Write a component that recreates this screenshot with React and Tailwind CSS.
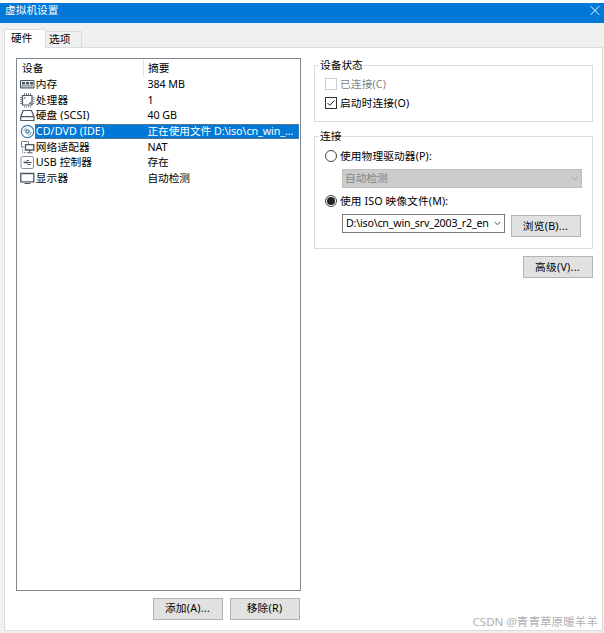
import { useState } from "react";
import clsx from "clsx";

const stroke = { fill: "none", stroke: "#4b5866", strokeWidth: 1 };

const MemoryIcon = () => (
  <svg width="15" height="15" viewBox="0 0 15 15" {...stroke}>
    <path d="M.5 3.5h13.5v7.5H.5z" fill="#e8ebee" />
    <path d="M2 5h3v2.5H2zM6 5h3v2.5H6zM10 5h3v2.5h-3z" fill="#4b5866" stroke="none" />
    <path d="M1 8.5h13" stroke="#a5acb3" />
    <path d="M1.5 10h12" strokeDasharray="2 1" />
  </svg>
);

const CpuIcon = () => (
  <svg width="15" height="15" viewBox="0 0 15 15" {...stroke}>
    <path d="M2.5 2.5h9.5v9.5H2.5z" strokeWidth="1.2" />
    <path
      d="M4.5 0v2M6.5 0v2M8.5 0v2M10.5 0v2M4.5 13v1.5M6.5 13v1.5M8.5 13v1.5M10.5 13v1.5M0 4.5h2M0 6.5h2M0 8.5h2M0 10.5h2M12.5 4.5h2M12.5 6.5h2M12.5 8.5h2M12.5 10.5h2"
      stroke="#7c8690"
    />
    <path d="M4.5 5.5V4.5h1M9 10.5h1.5V9" />
  </svg>
);

const DiskIcon = () => (
  <svg width="15" height="15" viewBox="0 0 15 15" {...stroke}>
    <path d="M3.2 2.5h8.3l2.5 6.2v3.8H.7V8.7zM1 8.7h13" strokeWidth="1.2" />
  </svg>
);

const DiscIcon = () => (
  <svg width="15" height="15" viewBox="0 0 15 15" fill="none" stroke="#3e7ca6">
    <circle cx="7.5" cy="7.5" r="6.2" fill="#fff" strokeWidth="1.2" />
    <circle cx="7.5" cy="7.5" r="1.7" strokeWidth="1.3" />
    <path d="M3.7 7.2a4 4 0 0 1 3.3-3.5M11.3 7.8A4 4 0 0 1 8 11.3" stroke="#7fa9c6" />
  </svg>
);

const NetworkIcon = () => (
  <svg width="15" height="15" viewBox="0 0 15 15" {...stroke}>
    <path d="M8.5 4V1.5h-7v5.5h3" stroke="#7c8690" />
    <path d="M2.5 9v3.5h4" stroke="#7c8690" strokeDasharray="1.5 1" />
    <path d="M5.5 4.7h8.3V10H5.5z" strokeWidth="1.3" />
    <path d="M9.6 10v2.5M7 12.8h5.5" />
  </svg>
);

const UsbIcon = () => (
  <svg width="15" height="15" viewBox="0 0 15 15" {...stroke}>
    <rect x="1" y="1.5" width="12.5" height="12" rx="1.5" stroke="#8a929a" />
    <path d="M4 7.5h7.5M5.5 7.5l1.5-2h2M6.5 7.5l1.5 2h1.5" />
    <path d="M3 7.5l2-1.200v2.400z" fill="#4b5866" stroke="none" />
    <path d="M9 9h1.5v1H9z" fill="#4b5866" stroke="none" />
  </svg>
);

const DisplayIcon = () => (
  <svg width="15" height="15" viewBox="0 0 15 15" {...stroke}>
    <path d="M.8 2.5h13v8.300H.8z" strokeWidth="1.3" />
    <path d="M4.5 12.5h6" />
  </svg>
);

const devices = [
  { icon: MemoryIcon, name: "内存", summary: "384 MB" },
  { icon: CpuIcon, name: "处理器", summary: "1" },
  { icon: DiskIcon, name: "硬盘 (SCSI)", summary: "40 GB" },
  { icon: DiscIcon, name: "CD/DVD (IDE)", summary: "正在使用文件 D:\\iso\\cn_win_..." },
  { icon: NetworkIcon, name: "网络适配器", summary: "NAT" },
  { icon: UsbIcon, name: "USB 控制器", summary: "存在" },
  { icon: DisplayIcon, name: "显示器", summary: "自动检测" },
];

const Chevron = ({ className = "" }) => (
  <svg width="7" height="5" viewBox="0 0 7 5" fill="none" stroke="currentColor" className={className}>
    <path d="M.5.8l3 3 3-3" />
  </svg>
);

const Button = ({ className = "", children }) => (
  <button
    className={clsx(
      "flex h-[22px] w-[70px] shrink-0 items-center justify-center border border-[#b4b4b4] bg-[#e1e1e1] pr-px tracking-[0.25px] whitespace-nowrap",
      className
    )}
  >
    {children}
  </button>
);

const Group = ({ title, className = "", children }) => (
  <fieldset className={clsx("w-[279px] border border-[#dcdcdc]", className)}>
    <legend className="ml-[4px] h-[14px] px-px leading-[14px]">{title}</legend>
    {children}
  </fieldset>
);

const Radio = ({ checked, onChange, children }) => (
  <label className="flex h-[14px] items-center gap-[3px] leading-[14px]">
    <input type="radio" className="sr-only" checked={checked} onChange={onChange} />
    <span className="flex size-[12px] items-center justify-center rounded-full border border-[#444]">
      {checked && <span className="size-[8px] rounded-full bg-[#222]" />}
    </span>
    <span className="tracking-[0.12px]">{children}</span>
  </label>
);

const DeviceList = () => {
  const [selected, setSelected] = useState(3);

  return (
    <div className="h-[533px] w-[285px] border border-[#828790] bg-white">
      <div className="flex h-[18px] items-center">
        <div className="flex h-full w-[127px] items-center border-r border-[#e5e5e5] pl-[5px]">设备</div>
        <div className="pl-[4px]">摘要</div>
      </div>
      {devices.map(({ icon: Icon, name, summary }, i) => (
        <div key={name} className="flex h-[15.6px] items-center" onClick={() => setSelected(i)}>
          <span className="flex w-[18px] shrink-0 justify-end">
            <Icon />
          </span>
          <div
            className={clsx(
              "mr-px flex h-full flex-1 items-center whitespace-nowrap",
              i === selected && "bg-[#0078d7] text-white outline-1 -outline-offset-1 outline-dotted outline-[#5b83a0]"
            )}
          >
            <span className="w-[112.5px] pl-[0.8px] tracking-[0.12px]">{name}</span>
            <span className="tracking-[-0.07px]">{summary}</span>
          </div>
        </div>
      ))}
    </div>
  );
};

const App = () => {
  const [source, setSource] = useState("iso");

  return (
    <div className="relative flex h-[633px] w-[604px] flex-col overflow-hidden bg-[#f0f0f0] pt-[3px] font-['Noto_Sans','Noto_Sans_CJK_SC',sans-serif] text-[10.7px] leading-[15px] text-black shadow-[inset_0_3px_0_#fff]">
      <header className="flex h-[20px] shrink-0 items-center justify-between bg-[#0078d7] pr-[4px] pb-[5px] pl-[5px] text-white">
        <span>虚拟机设置</span>
        <svg width="10" height="10" viewBox="0 0 10 10" fill="none" stroke="#fff">
          <path d="M.7.2l8.6 8.6M9.3.2L.7 8.8" />
        </svg>
      </header>

      <nav className="flex h-[24px] shrink-0 items-end pl-[4px]">
        <div className="z-10 -mb-px flex h-[19px] w-[42px] items-center border border-b-0 border-[#dcdcdc] bg-white pb-px pl-[6px]">
          硬件
        </div>
        <div className="flex h-[16px] w-[36px] items-center border border-b-0 border-l-0 border-[#dcdcdc] bg-[#f0f0f0] pl-[3px]">
          选项
        </div>
      </nav>

      <main className="ml-[4px] flex h-[584px] w-[599px] shrink-0 gap-[13px] border border-[#dcdcdc] bg-white pt-[10px] pl-[11px]">
        <section>
          <DeviceList />
          <div className="mt-[6.5px] flex justify-end gap-[7px] pr-px">
            <Button>添加(A)...</Button>
            <Button>移除(R)</Button>
          </div>
        </section>

        <section>
          <Group title="设备状态" className="h-[64px]">
            <div className="flex flex-col gap-[5px] pt-[5px] pl-[10px]">
              <label className="flex h-[14px] items-center gap-[3px] tracking-[0.15px] text-[#838383]">
                <span className="size-[12px] border border-[#ccc]" />
                已连接(C)
              </label>
              <label className="flex h-[14px] items-center gap-[3px] tracking-[0.15px]">
                <span className="flex size-[12px] items-center justify-center border border-[#333]">
                  <svg width="10" height="10" viewBox="0 0 10 10" fill="none" stroke="#222">
                    <path d="M1.5 5l2.3 2.3 4.7-4.8" />
                  </svg>
                </span>
                启动时连接(O)
              </label>
            </div>
          </Group>

          <Group title="连接" className="mt-[7px] h-[120px]">
            <div className="pt-[6px] pl-[10px]">
              <Radio checked={source === "physical"} onChange={() => setSource("physical")}>
                使用物理驱动器(P):
              </Radio>
              <div className="mt-[6px] ml-[17px] flex h-[19px] w-[240px] items-center justify-between border border-[#bfbfbf] bg-[#ccc] pr-[3px] pl-[2px] text-[#838383]">
                自动检测
                <Chevron className="text-[#a0a0a0]" />
              </div>
              <div className="mt-[6px]">
                <Radio checked={source === "iso"} onChange={() => setSource("iso")}>
                  使用 ISO 映像文件(M):
                </Radio>
              </div>
              <div className="mt-[6px] ml-[17px] flex gap-[6px]">
                <div className="flex h-[19px] w-[163px] items-center justify-between border border-[#7a7a7a] bg-white pr-[3px] pl-[3px] tracking-[-0.22px] whitespace-nowrap">
                  D:\iso\cn_win_srv_2003_r2_en
                  <Chevron className="text-[#555]" />
                </div>
                <Button className="mt-px">浏览(B)...</Button>
              </div>
            </div>
          </Group>

          <div className="mt-[7px] flex justify-end">
            <Button>高级(V)...</Button>
          </div>
        </section>
      </main>

      <div className="absolute right-[6px] bottom-[4px] text-[11.6px] whitespace-nowrap text-[#b0b0b0]">
        CSDN @青青草原暖羊羊
      </div>
    </div>
  );
};

export default App;
